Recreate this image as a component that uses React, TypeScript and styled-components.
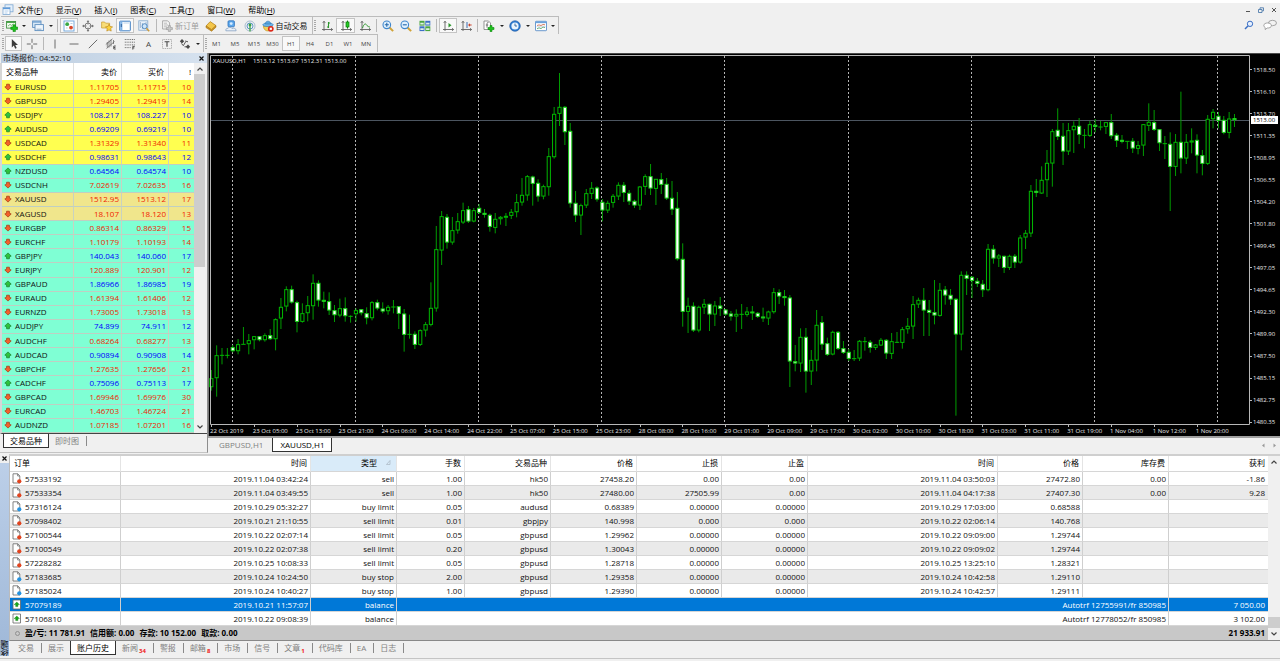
import React from "react";
import styled, { createGlobalStyle, css } from "styled-components";

const Global = createGlobalStyle`
  * { box-sizing: border-box; }
  body { margin: 0; background: #f0f0f0; }
  body, button, table {
    font-family: "Open Sans", "Noto Sans CJK SC", sans-serif;
    font-size: 8px;
    line-height: 12px;
    color: #000;
  }
  button { margin: 0; padding: 0; border: 0; background: none; white-space: nowrap; }
  svg { display: block; flex: none; }
`;

/* ---------- icons ---------- */

const Icon = ({ size = 12, children }: { size?: number; children: React.ReactNode }) => (
  <svg width={size} height={size} viewBox="0 0 12 12" fill="none" aria-hidden="true">
    {children}
  </svg>
);

const Plus = ({ x, y }: { x: number; y: number }) => (
  <path d={`M${x - 1} ${y - 3}h2v2h2v2h-2v2h-2v-2h-2v-2h2z`} fill="#1fc21f" stroke="#0a860a" strokeWidth=".6" />
);

const AppIcon = () => (
  <Icon>
    <rect x="3" y=".8" width="8" height="7" fill="#e4f0fc" stroke="#7da7d2" strokeWidth=".8" />
    <rect x="1" y="3.5" width="7" height="7" fill="#fff" stroke="#7da7d2" strokeWidth=".8" />
    <path d="M1 4.5h7" stroke="#5d9adb" strokeWidth="1.4" />
    <path d="M2.5 7h4M2.5 9h3" stroke="#9cc2e8" strokeWidth=".8" />
  </Icon>
);
const NewChart = () => (
  <Icon>
    <rect x=".6" y="1.500" width="9" height="6.600" fill="#f5fbf2" stroke="#3b8f3b" strokeWidth=".9" />
    <path d="M.6 2.200h9" stroke="#3f9c3f" strokeWidth="1.400" />
    <path d="M2 6l2-1.600 1.500 1 2-1.600" stroke="#4a9f4a" strokeWidth=".7" />
    <path d="M7 4.800h2.400v2.200h2.200v2.400H9.400v2.200H7V9.400H4.800V7H7z" fill="#1fc21f" stroke="#0a860a" strokeWidth=".6" />
  </Icon>
);
const Profiles = () => (
  <Icon>
    <rect x=".6" y="1" width="8.400" height="6.400" fill="#d8e8f7" stroke="#5f8fbf" strokeWidth=".9" />
    <path d="M.6 2h8.400" stroke="#6fa0d0" strokeWidth="1.300" />
    <rect x="3" y="4.600" width="8.400" height="6" fill="#eef5fc" stroke="#5f8fbf" strokeWidth=".9" />
    <path d="M4.500 9.200h5" stroke="#7d9dbd" strokeWidth=".8" />
  </Icon>
);
const MarketIcon = () => (
  <Icon>
    <rect x="1" y="1" width="10" height="10" fill="#fff" stroke="#6aa2da" strokeWidth=".9" />
    <circle cx="4.200" cy="4.200" r="1.900" fill="#39a845" />
    <circle cx="8" cy="7.600" r="1.900" fill="#d9482b" />
    <path d="M7.500 3.500h2M3 8h1.600" stroke="#9ab8d6" strokeWidth=".7" />
  </Icon>
);
const DataWindow = () => (
  <Icon>
    <circle cx="6" cy="6" r="3" stroke="#707070" strokeWidth=".9" />
    <path d="M6 .5v11M.5 6h11" stroke="#707070" strokeWidth=".9" />
    <path d="M4.600 2L6 .4 7.400 2zM4.600 10L6 11.600 7.400 10zM2 4.600L.4 6 2 7.400zM10 4.600L11.600 6 10 7.400z" fill="#707070" />
    <circle cx="6" cy="6" r="1.700" fill="#f0f0f0" />
  </Icon>
);
const FolderStar = () => (
  <Icon>
    <path d="M.6 2h3l1 1.200h4V8h-8z" fill="#f8dd79" stroke="#c79a2c" strokeWidth=".7" />
    <path d="M8 4.200l1.100 2.300 2.500.3-1.800 1.800.4 2.500L8 9.900l-2.200 1.200.4-2.500-1.800-1.800 2.500-.3z" fill="#fbd23e" stroke="#b98212" strokeWidth=".6" />
  </Icon>
);
const Terminal = () => (
  <Icon>
    <rect x=".7" y="1.200" width="10.600" height="9.600" rx=".6" fill="#fff" stroke="#3f7fc4" strokeWidth="1" />
    <rect x="1.200" y="1.600" width="2.200" height="8.800" fill="#7fb2e6" />
    <path d="M4.400 3h5.600" stroke="#a9c6e4" strokeWidth=".8" />
    <path d="M2.300 4v3" stroke="#1d4f8a" strokeWidth=".8" />
  </Icon>
);
const Tester = () => (
  <Icon>
    <rect x=".8" y=".8" width="9" height="9.400" fill="#e9f2fb" stroke="#82a6cb" strokeWidth=".8" />
    <path d="M2.400 2v6M4.400 3v6M8 2v4" stroke="#90aac6" strokeWidth=".8" />
    <circle cx="6.600" cy="6.200" r="2.500" fill="#cfe6fa" stroke="#4682bd" strokeWidth=".9" />
    <path d="M8.400 8.200l2.800 3" stroke="#c99b3e" strokeWidth="1.600" />
  </Icon>
);
const NewOrder = () => (
  <Icon>
    <path d="M1.600.8h5l2 2V9h-7z" fill="#f4f4f4" stroke="#9b9b9b" strokeWidth=".8" />
    <path d="M3 3.200h3M3 5h4M3 6.800h3" stroke="#a8a8a8" strokeWidth=".7" />
    <path d="M7.400 5.600h2v2h2v2h-2v2h-2v-2h-2v-2h2z" fill="#c9c9c9" stroke="#969696" strokeWidth=".6" />
  </Icon>
);
const Book = () => (
  <Icon>
    <path d="M1 6l4.200-4.400 5.800 4L6.600 9.800z" fill="#f3c64a" stroke="#b07d17" strokeWidth=".7" />
    <path d="M1 6v1.600l5.600 3.600 4.400-4V5.600L6.600 9.800z" fill="#d99d22" stroke="#a06e12" strokeWidth=".6" />
  </Icon>
);
const Community = () => (
  <Icon>
    <rect x="3" y=".8" width="6.400" height="6" rx="1" fill="#5da9ee" stroke="#2b6fb8" strokeWidth=".8" />
    <circle cx="6.200" cy="3.600" r="1.400" fill="#d7ecff" />
    <path d="M.9 10.800c-.5-2 1.300-2.800 2-2.300.6-1.700 3.400-1.700 4 0 1.700-.8 4.600 0 4.200 2.300z" fill="#e9f0f8" stroke="#7898bb" strokeWidth=".7" />
  </Icon>
);
const SignalIcon = () => (
  <Icon>
    <circle cx="6" cy="6" r="5" stroke="#a8bccf" strokeWidth="1" />
    <circle cx="6" cy="6" r="3" stroke="#5d96c8" strokeWidth="1" />
    <circle cx="6" cy="5" r="1.400" fill="#2f9f3c" />
    <path d="M6 5v6.500" stroke="#3da349" strokeWidth="1.300" />
  </Icon>
);
const AutoTrade = () => (
  <Icon>
    <path d="M1.400 6c0 3 2 5 4.600 5s4-2 4-5z" fill="#f2cf58" stroke="#b98b1c" strokeWidth=".6" />
    <ellipse cx="6" cy="4.800" rx="5.300" ry="1.800" fill="#6fb6ea" stroke="#2f78b4" strokeWidth=".6" />
    <path d="M3.300 4c0-3.800 5.400-3.800 5.400 0z" fill="#58a5e0" stroke="#2f78b4" strokeWidth=".6" />
    <circle cx="8.800" cy="8.800" r="2.900" fill="#dd2a1b" />
    <rect x="7.700" y="7.700" width="2.200" height="2.200" fill="#fff" />
  </Icon>
);
const Axes = () => <path d="M3 1.500v9.500M1 9.500h10.500M1.800 2.800L3 1.200l1.200 1.600M10 8.300l1.600 1.200L10 10.700" stroke="#606060" strokeWidth=".9" />;
const BarChart = () => (
  <Icon><Axes /><path d="M7.500 2v6M6 7h1.500M7.500 3H9" stroke="#2b962b" strokeWidth="1.100" /></Icon>
);
const CandleChart = () => (
  <Icon><Axes /><path d="M7.500.6v8" stroke="#0a7d0a" /><rect x="6" y="2" width="3" height="5" fill="#26c926" stroke="#0a7d0a" strokeWidth=".7" /></Icon>
);
const LineChart = () => (
  <Icon><Axes /><path d="M3.500 8c1.500-4.500 3-5 4.500-2.500 1 1 2 1.500 3 1.500" stroke="#2b962b" strokeWidth="1" /></Icon>
);
const Zoom = ({ plus }: { plus?: boolean }) => (
  <Icon>
    <path d="M7.500 7.500l3.600 3.600" stroke="#d1a338" strokeWidth="2" />
    <circle cx="4.800" cy="4.800" r="3.800" fill="#dff0fd" stroke="#3f86cc" strokeWidth="1.100" />
    <path d={plus ? "M2.800 4.800h4M4.800 2.800v4" : "M2.800 4.800h4"} stroke="#2568ad" strokeWidth="1.100" />
  </Icon>
);
const Tile = () => (
  <Icon>
    <rect x=".5" y=".8" width="5" height="4.800" fill="#4aa53f" />
    <rect x="6.300" y=".8" width="5" height="4.800" fill="#3a6fc6" />
    <rect x=".5" y="6.300" width="5" height="4.800" fill="#3a6fc6" />
    <rect x="6.300" y="6.300" width="5" height="4.800" fill="#4aa53f" />
    <path d="M1.300 2.800h3.400v1.600H1.300zM7.100 2.800h3.400v1.600H7.100zM1.300 8.300h3.400v1.600H1.300zM7.100 8.300h3.400v1.600H7.100z" fill="#dff0e6" />
  </Icon>
);
const AutoScroll = () => (
  <Icon><Axes /><path d="M6.500 3l3 2.200-3 2.200z" fill="#2b962b" /></Icon>
);
const Shift = () => (
  <Icon><Axes /><path d="M7 2v6" stroke="#3c6fb5" /><path d="M8 5l2-1.800v1.200h1.600v1.200H10v1.200z" fill="#c9412a" /></Icon>
);
const Indicators = () => (
  <Icon>
    <path d="M1 1h4.500l2 2v6.500H1z" fill="#fff" stroke="#7c7c7c" strokeWidth=".8" />
    <path d="M5.500 2.500c-1.500-.3-1.500.8-1.500 2v3.200M2.800 5h2.400" stroke="#555" strokeWidth=".8" />
    <Plus x={8} y={8.5} />
  </Icon>
);
const Clock = () => (
  <Icon>
    <circle cx="6" cy="6" r="5.300" fill="#2d7bd0" stroke="#1d56a0" strokeWidth=".6" />
    <circle cx="6" cy="6" r="3.600" fill="#eaf4fd" />
    <path d="M6 3.600V6h2" stroke="#305f92" strokeWidth=".9" />
  </Icon>
);
const Template = () => (
  <Icon>
    <rect x=".5" y="1.300" width="11" height="9.400" rx=".6" fill="#fff" stroke="#5c8fc8" strokeWidth=".9" />
    <path d="M.5 2.300h11" stroke="#6ba2dc" strokeWidth="1.700" />
    <path d="M2 5.500l2-.6 2 .6 2-1 2 .3" stroke="#c85a3c" strokeWidth=".8" />
    <path d="M2 8.800l2-1 2 .8 2-1.600 2 .6" stroke="#4d9e56" strokeWidth=".8" />
    <path d="M1.500 6.700h9" stroke="#9ab8d6" strokeWidth=".5" />
  </Icon>
);
const Caret = () => (
  <svg width="4" height="2" viewBox="0 0 4 2" aria-hidden="true"><path d="M0 0h4L2 2z" fill="#222" /></svg>
);
const Search = () => (
  <Icon size={10}>
    <path d="M5 7L1.200 10.800" stroke="#3b6fc4" strokeWidth="1.800" />
    <circle cx="7.200" cy="4.600" r="3.200" fill="#e6f0ff" stroke="#3b6fc4" strokeWidth="1.200" />
  </Icon>
);
const Chat = () => (
  <svg width="14" height="12" viewBox="0 0 14 12" fill="none" aria-hidden="true">
    <ellipse cx="9.500" cy="4" rx="4" ry="2.700" fill="#f2f2f2" stroke="#909090" strokeWidth=".8" />
    <path d="M.8 6.500c0-3.400 7.600-3.400 7.600 0 0 2-2 2.600-4.200 2.500l-2 1.600V8.600C1.400 8.200.8 7.400.8 6.500z" fill="#fff" stroke="#909090" strokeWidth=".8" />
  </svg>
);

const g = "#5c5c5c";
const Cursor = () => <Icon><path d="M3.800 1v8.400l2-1.900 1.400 3.300 1.500-.7-1.400-3.100H10z" fill="#3c3c3c" /></Icon>;
const Cross = () => <Icon><path d="M6 .8v4M6 7.200v4M.8 6h4M7.200 6h4" stroke={g} strokeWidth=".9" /></Icon>;
const VLine = () => <Icon><path d="M6 1.500v9" stroke={g} strokeWidth=".9" /></Icon>;
const HLine = () => <Icon><path d="M1.500 6h9" stroke={g} strokeWidth=".9" /></Icon>;
const Trend = () => <Icon><path d="M1.800 10.200l8.400-8.400" stroke={g} strokeWidth=".9" /></Icon>;
const Channel = () => (
  <Icon>
    <path d="M.8 6.500L7.500.8M1.500 10.500l8-7M4 2.500v7M6 1.500v7M2.300 4v5.500M8.500 2v4" stroke={g} strokeWidth=".7" />
    <path d="M10.800 8h-2v3h2M8.800 9.500h1.600" stroke="#333" strokeWidth=".8" />
  </Icon>
);
const Fibo = () => (
  <Icon>
    <path d="M.8 1.500h10M.8 4.200h10M.8 6.900h10M.8 9.600h6" stroke={g} strokeWidth=".9" strokeDasharray="1 .8" />
    <path d="M10.800 8.400h-2v3.200M8.800 9.900h1.600" stroke="#333" strokeWidth=".8" />
  </Icon>
);
const LabelBox = () => (
  <Icon>
    <rect x="1.500" y="1.500" width="9" height="9" stroke="#888" strokeWidth=".7" strokeDasharray="1 .8" />
    <path d="M3.600 3.800h4.800M6 3.800v5" stroke="#444" strokeWidth="1.100" />
  </Icon>
);
const Arrows = () => (
  <Icon>
    <path d="M3 1l2.200 2.200L3 5.400.8 3.200zM9 11l2.200-2.200L9 6.600 6.800 8.800z" fill="#4a4a4a" />
    <path d="M2.500 5.500l1.800 2.200L6.500 4M5.500 8.800H8M6 3l3 .8" stroke="#4a4a4a" strokeWidth=".9" />
  </Icon>
);
const Tick = ({ up }: { up: boolean }) => (
  <svg width="8" height="8" viewBox="0 0 8 8" aria-hidden="true">
    <path
      d={up ? "M4 .9L7.200 4 5.400 4.900V6.800H2.600V4.900L.8 4z" : "M4 7.100L.8 4l1.800-.9V1.200h2.800v1.900L7.200 4z"}
      fill={up ? "#2cc43c" : "#f4602a"}
      stroke={up ? "#1b7a26" : "#a2330f"}
      strokeWidth=".7"
    />
  </svg>
);
const DocIcon = ({ kind }: { kind: string }) =>
  kind === "balance" ? (
    <svg width="10" height="11" viewBox="0 0 10 11" aria-hidden="true">
      <path d="M1 1h7.500v9H1z" fill="#fff" stroke="#666" strokeWidth=".8" />
      <path d="M4.800 3l2.600 2.600H5.900v2H3.700v-2H2.200z" fill="#17a817" stroke="#0c7a0c" strokeWidth=".4" />
    </svg>
  ) : (
    <svg width="10" height="11" viewBox="0 0 10 11" aria-hidden="true">
      <path d="M1 .8h4.800l2 2.200v7H1z" fill="#fff" stroke="#666" strokeWidth=".8" />
      <path d="M5.600.8V3h2.200" stroke="#666" strokeWidth=".7" fill="none" />
      <circle cx="7.300" cy="8.300" r="2.100" fill={kind === "sell" ? "#e2431e" : "#2492e0"} />
    </svg>
  );
const SortMark = () => (
  <svg width="5" height="5" viewBox="0 0 5 5" fill="none" aria-hidden="true">
    <path d="M.5 4.500L4 .5v4z" stroke="#a9b6c2" strokeWidth=".7" />
  </svg>
);
const Chevron = ({ down }: { down?: boolean }) => (
  <svg width="6" height="4" viewBox="0 0 6 4" fill="none" aria-hidden="true">
    <path d={down ? "M.5.5L3 3 5.500.5" : "M.5 3.500L3 1l2.500 2.500"} stroke="#444" strokeWidth="1.200" />
  </svg>
);
const CloseMark = () => (
  <svg width="5" height="5" viewBox="0 0 5 5" aria-hidden="true"><path d="M.5.5l4 4M4.500.5l-4 4" stroke="#111" strokeWidth="1.200" /></svg>
);

/* ---------- window chrome ---------- */

const Window = styled.div`
  min-height: 100vh;
  display: flex;
  flex-direction: column;
  border-top: 3px solid #fff;
  background: #f0f0f0;
`;
const MenuBar = styled.nav`
  height: 13px;
  display: flex;
  align-items: center;
  gap: 4px;
  padding: 0 2px;
`;
const MenuList = styled.div`
  display: flex;
  gap: 13px;
`;
const MenuItem = styled.button`
  height: 12px;
  u { text-underline-offset: 1px; }
`;
const WindowControls = styled.div`
  margin-left: auto;
  display: flex;
  gap: 7px;
  padding-right: 1px;
`;
const ToolRow = styled.div`
  height: 18px;
  display: flex;
  align-items: stretch;
  padding-left: 1px;
`;
const ToolGroup = styled.div`
  display: flex;
  align-items: stretch;
  padding-right: 2px;
  border: solid #bcbcbc;
  border-width: 1px 1px 0 0;
`;
const Grip = styled.span`
  width: 2px;
  margin: 3px 1px;
  background: repeating-linear-gradient(#a8a8a8 0 1px, #f0f0f0 1px 2px);
`;
const Divider = styled.span`
  width: 1px;
  margin: 2px;
  background: #b8b8b8;
`;
const ToolButton = styled.button<{ $w: number; $on?: boolean; $tone?: string; $small?: boolean }>`
  width: ${(p) => p.$w}px;
  margin: 1px 0;
  display: flex;
  align-items: center;
  justify-content: center;
  gap: 2px;
  color: ${(p) => p.$tone || "#111"};
  font-size: ${(p) => (p.$small ? 6 : 8)}px;
  ${(p) =>
    p.$on &&
    css`
      background: #f9f9f9;
      border: 1px solid #c4c4c4;
    `}
`;
const CornerTools = styled.div`
  margin-left: auto;
  display: flex;
  align-items: center;
  gap: 9px;
  padding-right: 3px;
`;

/* ---------- market watch ---------- */

const Workspace = styled.div`
  display: flex;
  height: 400px;
  margin-top: 1px;
`;
const MarketPanel = styled.section`
  width: 208px;
  flex: none;
  display: flex;
  flex-direction: column;
  border-right: 1px solid #8d8d8d;
  border-bottom: 1px solid #c4c4c4;
`;
const PanelTitle = styled.header`
  height: 10px;
  display: flex;
  align-items: center;
  justify-content: space-between;
  padding: 0 3px 0 2px;
  margin-left: 1px;
  line-height: 10px;
  color: #222;
  background: linear-gradient(90deg, #bccde0, #d6e2ef);
`;
const MarketBody = styled.div`
  display: flex;
  height: 371px;
  overflow: hidden;
  border-left: 2px solid #d6d6d6;
  border-bottom: 1px solid #444;
`;
const MarketTable = styled.table`
  width: 192px;
  flex: none;
  table-layout: fixed;
  border-collapse: separate;
  border-spacing: 0;
  th, td { padding: 0 2px 0 0; text-align: right; border-right: 1px solid #c9d2c0; white-space: nowrap; }
  th { height: 17px; font-weight: 400; background: #fff; border-right-color: #e0e0e0; padding-right: 4px; }
  th:first-child { text-align: left; padding-left: 4px; }
  th:last-child, td:last-child { border-right: 0; padding-right: 3px; }
  td { height: 14px; border-bottom: 1px solid #bfcfc2; }
`;
const QuoteRow = styled.tr<{ $bg: string; $ink: string }>`
  background: ${(p) => p.$bg};
  color: ${(p) => p.$ink};
`;
const SymbolCell = styled.span`
  display: flex;
  align-items: center;
  gap: 3px;
  padding-left: 2px;
  color: #111;
`;
const ScrollTrack = styled.div<{ $w: number }>`
  width: ${(p) => p.$w}px;
  flex: none;
  display: flex;
  flex-direction: column;
  align-items: center;
  padding: 4px 0;
  background: #f0f0f0;
`;
const Thumb = styled.div<{ $h: number; $top: number }>`
  width: 100%;
  height: ${(p) => p.$h}px;
  margin: ${(p) => p.$top}px 0 auto;
  background: #cdcdcd;
`;
const LowThumb = styled(Thumb)`margin: auto 0 4px;`;
const Tabs = styled.div`
  display: flex;
  height: 15px;
  padding-left: 3px;
`;
const Tab = styled.button<{ $on?: boolean; $pad?: number; $bar?: boolean }>`
  height: 14px;
  padding: 0 ${(p) => p.$pad ?? 6}px;
  color: ${(p) => (p.$on ? "#000" : "#808080")};
  display: flex;
  align-items: center;
  ${(p) =>
    p.$on
      ? css`
          background: #fff;
          border: solid #333;
          border-width: 0 1px 1px 1px;
        `
      : p.$bar &&
        css`
          &::after {
            content: "";
            width: 1px;
            height: 10px;
            margin-left: 7px;
            margin-right: -${p.$pad ?? 6}px;
            background: #8a8a8a;
          }
        `}
`;
const Count = styled.sub`
  margin-left: 1px;
  padding-top: 5px;
  font-size: 6px;
  font-weight: 700;
  line-height: 6px;
  color: #f01818;
`;

/* ---------- chart ---------- */

const ChartPanel = styled.section`
  flex: 1;
  min-width: 0;
  display: flex;
  flex-direction: column;
`;
const ChartFrame = styled.div`
  height: 386px;
  background: #000;
  border-bottom: 2px solid #a0a0a0;
  overflow: hidden;
  svg { width: 100%; height: 384px; }
  text { font-family: "Open Sans", sans-serif; font-size: 6px; fill: #e8e8e8; }
  text.now { fill: #000; }
`;
const ChartTabs = styled(Tabs)`
  padding: 0 2px;
  justify-content: space-between;
  > div { display: flex; }
`;
const TabArrows = styled.span`
  align-items: center;
  display: flex;
  gap: 8px;
  padding-right: 1px;
`;

// Bars are [high, body top, body bottom, low, kind]; kind: 1 bearish, 0 bullish.
type Bar = [number, number, number, number, number];
const runs: { base: number; bars: Bar[] }[] = [
  {
    base: 591,
    bars: [
      [360,385,412,422,0],[286,316,385,440,0],[294,316,316,343,0],[294,316,316,325,0],[285,292,304,307,1],[267,283,304,313,0],
      [231,283,283,283,0],[252,271,283,313,0],[258,259,271,298,0],[258,259,271,274,1],[250,256,271,275,0],[237,256,268,270,1],
      [205,208,268,301,0],[144,171,206,237,0],[109,118,170,184,0],[107,118,158,161,1],[152,157,216,247,1],[160,190,216,218,0],
      [138,166,190,214,0],[73,99,169,209,0],[91,99,152,170,1],[125,150,154,175,1],[127,154,182,195,1],[165,181,196,216,1],
      [146,175,197,202,0],[142,175,199,215,1],[196,199,199,218,0],[175,181,193,215,0],[177,178,190,196,1],[172,190,205,223,1],
      [153,157,205,211,0],[149,157,176,181,1],[157,176,185,190,1],[165,171,184,194,0],[150,171,171,190,0],[168,169,192,237,1],
      [177,191,255,305,1],[194,253,253,266,0],[244,252,285,297,1],[238,241,285,288,0],[216,223,242,260,0],[97,174,225,229,0],
    ],
  },
  {
    base: 411,
    bars: [
      [108,178,356,365,0],[63,79,182,225,0],[72,81,158,176,1],[81,121,158,164,0],[69,94,122,131,0],[38,61,98,102,0],
      [48,58,95,99,1],[54,61,95,97,0],[42,54,69,72,1],[57,69,75,83,1],[71,75,111,125,1],[69,87,114,130,0],
      [78,81,88,104,0],[69,78,83,108,0],[57,66,78,87,0],[12,37,67,82,0],
    ],
  },
  {
    base: -9,
    bars: [
      [384,435,458,467,0],[375,379,437,452,0],[377,380,402,467,1],[388,399,440,455,1],[404,409,440,448,0],[294,319,412,437,0],
      [171,192,322,326,0],[69,171,192,228,0],[168,171,247,285,1],[219,243,461,473,1],[423,459,497,516,1],[461,466,497,555,0],
      [417,430,467,474,0],[396,414,432,447,0],[409,413,449,455,1],[447,456,482,514,1],[452,459,482,489,0],[432,438,459,473,0],
      [397,405,440,450,0],[396,405,429,456,1],[420,429,455,465,1],[449,453,467,474,1],[408,410,467,480,0],[373,379,411,435,0],
      [342,379,416,435,1],[387,387,417,465,0],[369,388,405,432,1],[384,402,446,450,1],[393,444,479,495,1],[426,474,628,632,1],
    ],
  },
  {
    base: 291,
    bars: [
      [280,327,486,530,1],[443,468,486,549,0],[457,468,542,546,1],[467,471,542,547,0],[447,462,473,492,0],[461,462,494,543,1],
      [453,467,494,528,0],[441,467,477,498,1],[477,479,494,497,1],[483,491,500,512,1],[478,492,500,546,0],[462,493,493,537,0],
      [471,485,495,500,0],[468,485,490,510,1],[486,489,501,504,1],[473,500,505,516,1],[482,485,506,525,0],[414,427,487,491,0],
      [418,427,440,462,1],[420,439,444,467,1],[435,443,635,711,1],[585,634,641,664,1],[535,561,641,666,0],[534,561,665,728,1],
      [600,630,665,705,0],[480,525,632,664,0],[498,517,584,600,1],[563,580,615,618,1],[542,546,614,616,0],[543,546,597,600,1],
      [573,595,609,612,1],[597,606,627,633,1],[600,626,626,633,0],[570,573,626,633,0],[561,575,575,602,0],[570,576,594,608,1],
      [582,584,594,600,0],[564,570,587,588,0],[567,570,611,627,1],[549,574,612,627,0],[546,577,577,579,0],[531,538,579,596,0],
      [504,528,538,551,0],[438,463,530,567,0],[443,450,464,474,0],[414,450,482,558,1],[450,480,489,558,1],[390,487,497,523,1],
    ],
  },
  {
    base: 591,
    bars: [
      [99,120,198,200,0],[108,119,137,164,1],[117,135,149,165,1],[144,147,254,497,1],[64,75,254,301,0],[64,75,87,135,1],
      [78,81,93,144,1],[84,93,102,111,1],[90,102,121,141,1],
    ],
  },
  {
    base: -9,
    bars: [
      [582,597,721,724,0],[585,597,626,641,1],[612,617,626,651,0],[617,618,654,669,1],[614,618,654,660,0],[612,618,638,654,1],
      [555,563,638,641,0],[540,549,563,597,0],[405,423,551,561,0],[387,423,429,441,1],[349,390,431,432,0],[300,339,391,441,0],
      [237,244,341,410,0],[175,240,261,270,1],[219,258,305,345,1],[219,241,305,315,0],[214,228,241,309,0],[204,228,255,282,1],
      [237,256,256,295,0],[213,223,258,261,0],[207,225,231,247,1],[213,231,231,241,0],[216,217,231,252,0],[192,217,259,267,1],
      [249,255,273,291,1],[255,270,276,280,1],[274,274,274,297,0],[264,273,296,309,1],[273,286,297,313,0],[222,223,287,318,0],
      [160,216,228,243,0],[180,217,240,243,1],[237,238,280,303,1],[258,281,281,327,0],[247,282,351,483,1],[252,276,351,378,0],
      [125,276,326,370,1],[252,276,326,342,0],[235,272,278,310,0],[253,270,317,370,1],[300,316,342,376,1],[195,207,342,345,0],
      [177,186,208,235,0],[186,198,213,235,1],[198,210,249,253,1],[186,206,249,265,0],[192,205,210,231,1],
    ],
  },
];
const candles = runs.flatMap(({ base, bars }) =>
  bars.map(([h, t, b, l, down]) => ({ h: (base + h) / 3, t: (base + t) / 3, b: (base + b) / 3, l: (base + l) / 3, down }))
);
const STEP = 5.357;
const prices = "1518.50 1516.10 1513.70 1511.35 1508.95 1506.55 1504.20 1501.80 1499.45 1497.05 1494.65 1492.30 1489.90 1487.50 1485.15 1482.75 1480.35".split(" ");
const times = [
  "22 Oct 2019", "23 Oct 05:00", "23 Oct 13:00", "23 Oct 21:00", "24 Oct 06:00", "24 Oct 14:00", "24 Oct 22:00", "25 Oct 07:00",
  "25 Oct 15:00", "25 Oct 23:00", "28 Oct 08:00", "28 Oct 16:00", "29 Oct 01:00", "29 Oct 09:00", "29 Oct 17:00", "30 Oct 02:00",
  "30 Oct 10:00", "30 Oct 18:00", "31 Oct 03:00", "31 Oct 11:00", "31 Oct 19:00", "1 Nov 04:00", "1 Nov 12:00", "1 Nov 20:00",
];

const PriceChart = () => (
  <svg viewBox="0 0 1072 384" preserveAspectRatio="xMinYMin meet" role="img" aria-label="XAUUSD H1">
    <path d="M0 .5h1072" stroke="#4a4a4a" />
    <path d="M.5 0v384" stroke="#777" />
    {Array.from({ length: 9 }, (_, k) => (
      <path key={k} d={`M${Math.floor(24 + k * 123.2) + 0.5} 3v368`} stroke="#b4b4b4" strokeDasharray="2 2" />
    ))}
    <path d="M3 67.500h1038" stroke="#4c5560" />
    {candles.map((c, i) => {
      const x = 3.3 + i * STEP;
      const tall = c.b - c.t;
      return (
        <g key={i} stroke={c.down ? "#16d016" : "#00b800"} strokeWidth="1">
          <path d={`M${x} ${c.h}V${c.l}`} stroke="#009c00" />
          {tall < 1 ? (
            <path d={`M${x - 2.2} ${c.t}h4.400`} />
          ) : (
            <rect x={x - 1.6} y={c.t + 0.3} width="3.200" height={Math.max(tall - 0.9, 1)} fill={c.down ? "#fff" : "#000"} />
          )}
        </g>
      );
    })}
    <path d="M2.500 371.500V2.500H1041.500V371.500z" fill="none" stroke="#b8b8b8" />
    {prices.map((p, i) => (
      <g key={p}>
        <path d={`M1041 ${Math.round(16 + i * 22.04) + 0.5}h3`} stroke="#b8b8b8" />
        <text x="1045" y={18.5 + i * 22.04}>{p}</text>
      </g>
    ))}
    <rect x="1043" y="63" width="27" height="8" fill="#fff" />
    <text className="now" x="1045" y="69.300">1513.00</text>
    {times.map((t, i) => (
      <g key={t}>
        <path d={`M${Math.round(3 + i * 42.857) + 0.5} 371v3`} stroke="#b8b8b8" />
        <text x={2 + i * 42.857} y="379.500">{t}</text>
      </g>
    ))}
    <text x="5" y="10">XAUUSD,H1</text>
    <text x="45" y="10">1513.12 1513.67 1512.31 1513.00</text>
  </svg>
);

/* ---------- terminal ---------- */

const TerminalPanel = styled.section`
  display: flex;
  height: 205px;
  margin-top: 1px;
  border-bottom: 1px solid #c4c4c4;
`;
const Rail = styled.aside`
  width: 9px;
  height: 202px;
  flex: none;
  display: flex;
  flex-direction: column;
  align-items: center;
  justify-content: space-between;
  background: linear-gradient(#f0f0f0 0 9px, #bccfe8 9px, #9fb8d8);
  padding-top: 2px;
  span { writing-mode: vertical-rl; transform: rotate(180deg); line-height: 9px; }
`;
const TerminalMain = styled.div`
  flex: 1;
  min-width: 0;
  border-top: 2px solid #cfcfcf;
`;
const History = styled.div`
  display: flex;
  border-left: 1px solid #bbb;
  border-bottom: 1px solid #888;
  height: 185px;
`;
const HistoryTable = styled.table`
  flex: 1;
  width: 0;
  table-layout: fixed;
  border-collapse: separate;
  border-spacing: 0;
  background: #fff;
  th, td { text-align: right; white-space: nowrap; padding: 0 2px 0 0; border-right: 1px solid #cfcfcf; border-bottom: 1px solid #d6d6d6; }
  th { height: 16px; font-weight: 400; padding: 0 3px 2px 0; border-right-color: #e4e4e4; }
  td { height: 14px; }
  th:first-child { text-align: left; padding-left: 4px; }
  th:last-child, td:last-child { border-right: 0; padding-right: 3px; }
`;
const SortedHead = styled.th`
  background: #d9ebf9;
  span { display: flex; align-items: center; justify-content: flex-end; gap: 9px; padding-right: 2px; }
`;
const OrderRow = styled.tr<{ $alt: boolean; $selected: boolean }>`
  background: ${(p) => (p.$selected ? "#0078d7" : p.$alt ? "#eaeaea" : "#fff")};
  color: ${(p) => (p.$selected ? "#fff" : "#111")};
`;
const OrderCell = styled.span`
  display: flex;
  align-items: center;
  gap: 3px;
  padding-left: 2px;
`;
const TotalRow = styled.tr`
  background: #c8c8c8;
  font-weight: 700;
  td { border-right: 0; border-bottom: 0; }
`;
const TotalText = styled.span`
  display: flex;
  align-items: center;
  gap: 5px;
  padding-left: 5px;
`;
const Totals = styled.span`
  display: flex;
  gap: 5px;
`;
const Dot = styled.span`
  width: 5px;
  height: 5px;
  border-radius: 50%;
  border: 1px solid #909090;
`;

/* ---------- data ---------- */

const menus = [["文件", "F"], ["显示", "V"], ["插入", "I"], ["图表", "C"], ["工具", "T"], ["窗口", "W"], ["帮助", "H"]];
const Y = "#ffff50", A = "#7fffd4", K = "#f0e68c";
const quotes: [string, string, string, number, boolean, string][] = [
  ["EURUSD", "1.11705", "1.11715", 10, false, Y],
  ["GBPUSD", "1.29405", "1.29419", 14, false, Y],
  ["USDJPY", "108.217", "108.227", 10, true, Y],
  ["AUDUSD", "0.69209", "0.69219", 10, true, Y],
  ["USDCAD", "1.31329", "1.31340", 11, false, Y],
  ["USDCHF", "0.98631", "0.98643", 12, true, Y],
  ["NZDUSD", "0.64564", "0.64574", 10, true, A],
  ["USDCNH", "7.02619", "7.02635", 16, false, A],
  ["XAUUSD", "1512.95", "1513.12", 17, false, K],
  ["XAGUSD", "18.107", "18.120", 13, false, K],
  ["EURGBP", "0.86314", "0.86329", 15, false, A],
  ["EURCHF", "1.10179", "1.10193", 14, false, A],
  ["GBPJPY", "140.043", "140.060", 17, true, A],
  ["EURJPY", "120.889", "120.901", 12, false, A],
  ["GBPAUD", "1.86966", "1.86985", 19, true, A],
  ["EURAUD", "1.61394", "1.61406", 12, false, A],
  ["EURNZD", "1.73005", "1.73018", 13, false, A],
  ["AUDJPY", "74.899", "74.911", 12, true, A],
  ["AUDCHF", "0.68264", "0.68277", 13, false, A],
  ["AUDCAD", "0.90894", "0.90908", 14, true, A],
  ["GBPCHF", "1.27635", "1.27656", 21, false, A],
  ["CADCHF", "0.75096", "0.75113", 17, true, A],
  ["GBPCAD", "1.69946", "1.69976", 30, false, A],
  ["EURCAD", "1.46703", "1.46724", 21, false, A],
  ["AUDNZD", "1.07185", "1.07201", 16, false, A],
];
const orders: string[][] = [
  ["57533192", "2019.11.04 03:42:24", "sell", "1.00", "hk50", "27458.20", "0.00", "0.00", "2019.11.04 03:50:03", "27472.80", "0.00", "-1.86"],
  ["57533354", "2019.11.04 03:49:55", "sell", "1.00", "hk50", "27480.00", "27505.99", "0.00", "2019.11.04 04:17:38", "27407.30", "0.00", "9.28"],
  ["57316124", "2019.10.29 05:32:27", "buy limit", "0.05", "audusd", "0.68389", "0.00000", "0.00000", "2019.10.29 17:03:00", "0.68588", "", ""],
  ["57098402", "2019.10.21 21:10:55", "sell limit", "0.01", "gbpjpy", "140.998", "0.000", "0.000", "2019.10.22 02:06:14", "140.768", "", ""],
  ["57100544", "2019.10.22 02:07:14", "sell limit", "0.05", "gbpusd", "1.29962", "0.00000", "0.00000", "2019.10.22 09:09:00", "1.29744", "", ""],
  ["57100549", "2019.10.22 02:07:38", "sell limit", "0.20", "gbpusd", "1.30043", "0.00000", "0.00000", "2019.10.22 09:09:02", "1.29744", "", ""],
  ["57228282", "2019.10.25 10:08:33", "sell limit", "0.05", "gbpusd", "1.28718", "0.00000", "0.00000", "2019.10.25 13:25:10", "1.28321", "", ""],
  ["57183685", "2019.10.24 10:24:50", "buy stop", "2.00", "gbpusd", "1.29358", "0.00000", "0.00000", "2019.10.24 10:42:58", "1.29110", "", ""],
  ["57185024", "2019.10.24 10:40:27", "buy stop", "1.00", "gbpusd", "1.29390", "0.00000", "0.00000", "2019.10.24 10:42:57", "1.29111", "", ""],
  ["57079189", "2019.10.21 11:57:07", "balance", "Autotrf 12755991/fr 850985", "7 050.00"],
  ["57106810", "2019.10.22 09:08:39", "balance", "Autotrf 12778052/fr 850985", "3 102.00"],
];
const orderCols = [111, 190, 86, 68, 86, 86, 85, 86, 0, 85, 86, 99];
const totals = ["盈/亏: 11 781.91", "信用额: 0.00", "存款: 10 152.00", "取款: 0.00"];
const bottomTabs: [string, string?][] = [
  ["交易"], ["展示"], ["账户历史"], ["新闻", "34"], ["警报"], ["邮箱", "8"], ["市场"], ["信号"], ["文章", "1"], ["代码库"], ["EA"], ["日志"],
];
const frames: [string, number][] = [["M1", 17], ["M5", 20], ["M15", 18], ["M30", 19], ["H1", 18], ["H4", 20], ["D1", 19], ["W1", 18], ["MN", 18]];

const T = ({ w, label, on, children }: { w: number; label: string; on?: boolean; children: React.ReactNode }) => (
  <ToolButton $w={w} $on={on} aria-label={label}>{children}</ToolButton>
);

export default function App() {
  return (
    <Window>
      <Global />
      <MenuBar>
        <AppIcon />
        <MenuList>
          {menus.map(([name, key]) => (
            <MenuItem key={key}>{name}(<u>{key}</u>)</MenuItem>
          ))}
        </MenuList>
        <WindowControls>
          <button aria-label="最小化"><svg width="6" height="6" viewBox="0 0 6 6"><path d="M1 4.500h4" stroke="#555" /></svg></button>
          <button aria-label="还原"><svg width="6" height="6" viewBox="0 0 6 6" fill="none"><path d="M.5 2.500h3.500v3H.5zM2 2.300V.8h3.500v3H4.200" stroke="#3d6ea5" strokeWidth=".8" /></svg></button>
          <button aria-label="关闭"><svg width="6" height="6" viewBox="0 0 6 6"><path d="M1 1l4 4M5 1L1 5" stroke="#555" /></svg></button>
        </WindowControls>
      </MenuBar>

      <ToolRow>
        <ToolGroup>
          <Grip />
          <T w={14} label="新图表"><NewChart /></T>
          <T w={10} label="新图表列表"><Caret /></T>
          <T w={18} label="配置文件"><Profiles /></T>
          <T w={8} label="配置文件列表"><Caret /></T>
          <Divider />
          <T w={18} label="市场报价" on><MarketIcon /></T>
          <T w={20} label="数据窗口"><DataWindow /></T>
          <T w={18} label="导航"><FolderStar /></T>
          <T w={18} label="终端" on><Terminal /></T>
          <T w={20} label="策略测试"><Tester /></T>
          <Divider />
          <ToolButton $w={42} $tone="#9c9c9c"><NewOrder />新订单</ToolButton>
          <T w={20} label="编辑器"><Book /></T>
          <T w={19} label="社区"><Community /></T>
          <T w={19} label="信号"><SignalIcon /></T>
          <ToolButton $w={51}><AutoTrade />自动交易</ToolButton>
        </ToolGroup>
        <ToolGroup>
          <Grip />
          <T w={19} label="柱状图"><BarChart /></T>
          <T w={19} label="蜡烛图" on><CandleChart /></T>
          <T w={19} label="折线图"><LineChart /></T>
          <Divider />
          <T w={17} label="放大"><Zoom plus /></T>
          <T w={19} label="缩小"><Zoom /></T>
          <T w={19} label="平铺"><Tile /></T>
          <Divider />
          <T w={18} label="自动滚动" on><AutoScroll /></T>
          <T w={18} label="图表平移"><Shift /></T>
          <Divider />
          <T w={18} label="指标"><Indicators /></T>
          <T w={8} label="指标列表"><Caret /></T>
          <T w={18} label="周期"><Clock /></T>
          <T w={8} label="周期列表"><Caret /></T>
          <T w={18} label="模板"><Template /></T>
          <T w={6} label="模板列表"><Caret /></T>
        </ToolGroup>
        <CornerTools>
          <button aria-label="搜索"><Search /></button>
          <button aria-label="聊天"><Chat /></button>
        </CornerTools>
      </ToolRow>

      <ToolRow>
        <ToolGroup>
          <Grip />
          <T w={17} label="光标" on><Cursor /></T>
          <T w={19} label="十字线"><Cross /></T>
          <Divider />
          <T w={18} label="垂直线"><VLine /></T>
          <T w={19} label="水平线"><HLine /></T>
          <T w={19} label="趋势线"><Trend /></T>
          <T w={18} label="通道"><Channel /></T>
          <T w={19} label="斐波纳契"><Fibo /></T>
          <ToolButton $w={19} $tone="#444">A</ToolButton>
          <T w={18} label="文本标签"><LabelBox /></T>
          <T w={18} label="箭头"><Arrows /></T>
          <T w={7} label="箭头列表"><Caret /></T>
        </ToolGroup>
        <ToolGroup>
          <Grip />
          {frames.map(([name, w]) => (
            <ToolButton key={name} $w={w} $small $tone="#444" $on={name === "H1"}>{name}</ToolButton>
          ))}
        </ToolGroup>
      </ToolRow>

      <Workspace>
        <MarketPanel>
          <PanelTitle><span>市场报价: 04:52:10</span><button aria-label="关闭"><CloseMark /></button></PanelTitle>
          <MarketBody>
            <MarketTable>
              <colgroup><col width="72" /><col width="48" /><col width="47" /><col width="25" /></colgroup>
              <thead><tr><th>交易品种</th><th>卖价</th><th>买价</th><th>!</th></tr></thead>
              <tbody>
                {quotes.map(([sym, bid, ask, spread, up, bg]) => (
                  <QuoteRow key={sym} $bg={bg} $ink={up ? "#0000ff" : "#f01c00"}>
                    <td><SymbolCell><Tick up={up} />{sym}</SymbolCell></td>
                    <td>{bid}</td><td>{ask}</td><td>{spread}</td>
                  </QuoteRow>
                ))}
              </tbody>
            </MarketTable>
            <ScrollTrack $w={11}><Chevron /><Thumb $h={193} $top={3} /><Chevron down /></ScrollTrack>
          </MarketBody>
          <Tabs>
            <Tab $on>交易品种</Tab>
            <Tab $bar>即时图</Tab>
          </Tabs>
        </MarketPanel>

        <ChartPanel>
          <ChartFrame><PriceChart /></ChartFrame>
          <ChartTabs>
            <div><Tab $pad={9}>GBPUSD,H1</Tab><Tab $on $pad={7}>XAUUSD,H1</Tab></div>
            <TabArrows>
              <svg width="4" height="5" viewBox="0 0 4 5"><path d="M3.500.5L1 2.500l2.500 2z" fill="#999" /></svg>
              <svg width="4" height="5" viewBox="0 0 4 5"><path d="M.5.5L3 2.500l-2.500 2z" fill="#999" /></svg>
            </TabArrows>
          </ChartTabs>
        </ChartPanel>
      </Workspace>

      <TerminalPanel>
        <Rail><button aria-label="关闭"><CloseMark /></button><span>终端</span></Rail>
        <TerminalMain>
          <History>
            <HistoryTable>
              <colgroup>{orderCols.map((w, i) => (w ? <col key={i} width={w} /> : <col key={i} />))}</colgroup>
              <thead>
                <tr>
                  <th>订单</th><th>时间</th><SortedHead><span>类型<SortMark /></span></SortedHead><th>手数</th><th>交易品种</th><th>价格</th>
                  <th>止损</th><th>止盈</th><th>时间</th><th>价格</th><th>库存费</th><th>获利</th>
                </tr>
              </thead>
              <tbody>
                {orders.map((row, i) => {
                  const kind = row[2].split(" ")[0];
                  return (
                    <OrderRow key={row[0]} $alt={i % 2 === 1} $selected={row[0] === "57079189"}>
                      <td><OrderCell><DocIcon kind={kind} />{row[0]}</OrderCell></td>
                      {row.slice(1).map((v, j) => (
                        <td key={j} colSpan={kind === "balance" && j === 2 ? 8 : 1}>{v}</td>
                      ))}
                    </OrderRow>
                  );
                })}
              </tbody>
              <tfoot>
                <TotalRow>
                  <td colSpan={11}>
                    <TotalText><Dot /><Totals>{totals.map((t) => <span key={t}>{t}</span>)}</Totals></TotalText>
                  </td>
                  <td>21 933.91</td>
                </TotalRow>
              </tfoot>
            </HistoryTable>
            <ScrollTrack $w={12}><Chevron /><LowThumb $h={11} $top={0} /><Chevron down /></ScrollTrack>
          </History>
          <Tabs>
            {bottomTabs.map(([name, count], i) => (
              <Tab key={name} $on={name === "账户历史"} $bar={i !== 1}>
                {name}{count && <Count>{count}</Count>}
              </Tab>
            ))}
          </Tabs>
        </TerminalMain>
      </TerminalPanel>
    </Window>
  );
}
